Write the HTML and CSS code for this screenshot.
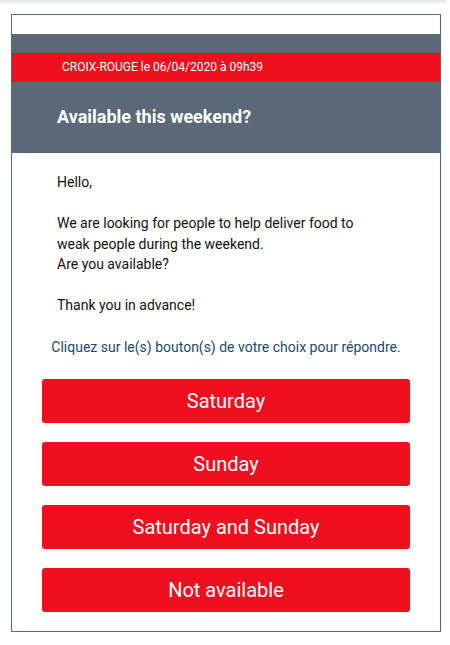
FILE: index.html
```html
<!DOCTYPE html>
<html>
<head>
<meta charset="utf-8">
<link rel="stylesheet" href="styles.css">
</head>
<body>
<div class="topbar"></div>
<div class="card">
  <div class="card-top"></div>
  <div class="header">
    <div class="sender">CROIX-ROUGE le 06/04/2020 à 09h39</div>
    <h1 class="title">Available this weekend?</h1>
  </div>
  <div class="content">
    <p class="message">Hello,<br><br>We are looking for people to help deliver food to<br>weak people during the weekend.<br>Are you available?<br><br>Thank you in advance!</p>
    <p class="hint">Cliquez sur le(s) bouton(s) de votre choix pour répondre.</p>
    <div class="buttons">
      <a class="btn">Saturday</a>
      <a class="btn">Sunday</a>
      <a class="btn">Saturday and Sunday</a>
      <a class="btn">Not available</a>
    </div>
  </div>
</div>
</body>
</html>
```
FILE: styles.css
```css
* { box-sizing: border-box; }
html, body { margin: 0; padding: 0; background: #fff; }
body { font-family: Roboto, "Noto Sans", sans-serif; }
.topbar {
  height: 4px;
  width: 446px;
  background: linear-gradient(#e6e7e9, #f4f5f6);
}
.card {
  margin: 10px 0 0 11px;
  width: 430px;
  border: 1px solid #5c6878;
  background: #fff;
}
.card-top { height: 19px; }
.header {
  background: #5a6878;
  padding: 19px 0 0;
  height: 119px;
}
.sender {
  background: #ef0f1e;
  color: #fff;
  font-size: 12px;
  height: 29px;
  line-height: 29px;
  padding-left: 50px;
}
.title {
  margin: 0;
  color: #fff;
  font-size: 18px;
  font-weight: 700;
  padding: 23px 0 0 45px;
  line-height: 24px;
}
.content { padding: 19px 0 19px; }
.message {
  margin: 0;
  padding-left: 45px;
  font-size: 14px;
  line-height: 20.5px;
  color: #111;
}
.hint {
  margin: 21px 0 0;
  text-align: center;
  font-size: 14px;
  line-height: 20px;
  color: #1b4a68;
}
.buttons {
  display: flex;
  flex-direction: column;
  gap: 19px;
  margin: 22px 30px 0;
}
.btn {
  display: flex;
  align-items: center;
  justify-content: center;
  height: 44px;
  background: #ef0f1e;
  color: #fff;
  border-radius: 3px;
  font-size: 20px;
}
```
